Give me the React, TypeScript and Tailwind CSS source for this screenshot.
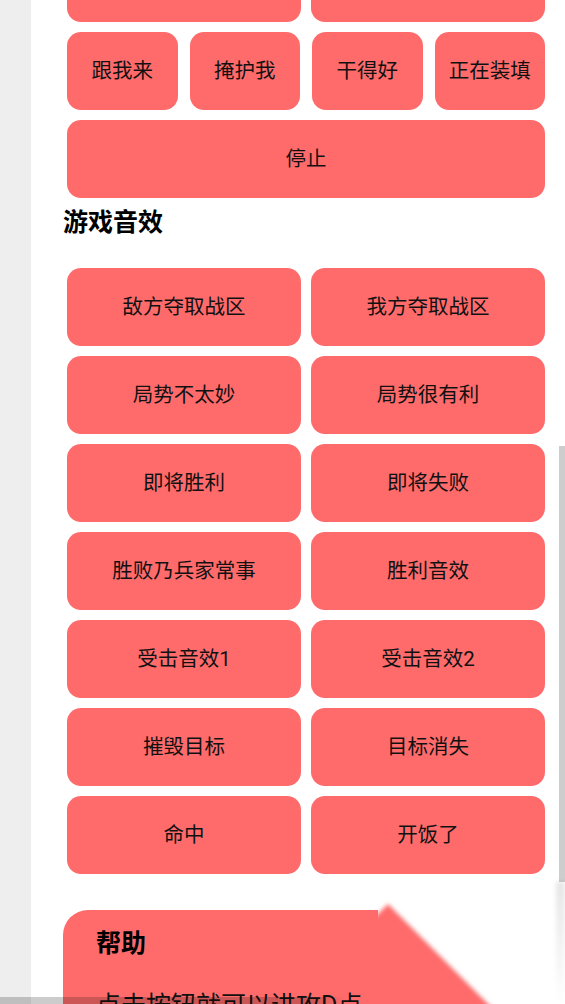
import React from "react";

const gameSounds = [
  "敌方夺取战区",
  "我方夺取战区",
  "局势不太妙",
  "局势很有利",
  "即将胜利",
  "即将失败",
  "胜败乃兵家常事",
  "胜利音效",
  "受击音效1",
  "受击音效2",
  "摧毁目标",
  "目标消失",
  "命中",
  "开饭了",
];

const quick = ["跟我来", "掩护我", "干得好", "正在装填"];

function Btn({ label }: { label: string }) {
  return (
    <button className="h-[78px] rounded-[14px] bg-[#ff6b6b] text-[20.5px] leading-none text-[#111] flex items-center justify-center whitespace-nowrap">
      {label}
    </button>
  );
}

export default function App() {
  return (
    <div className="relative flex h-[1004px] w-[565px] overflow-hidden font-[Roboto,'Noto_Sans_CJK_SC',sans-serif] text-[#111]">
      <div className="w-[31px] shrink-0 bg-[#eeeeee]" />
      <div className="flex-1 bg-white pl-[36px] pr-[20px]">
        <div className="-mt-[56px] flex flex-col">
          <div className="grid grid-cols-2 gap-[10px]">
            <Btn label="" />
            <Btn label="" />
          </div>
          <div className="mt-[10px] grid grid-cols-4 gap-[12px]">
            {quick.map((q) => (
              <Btn key={q} label={q} />
            ))}
          </div>
          <div className="mt-[10px] flex flex-col">
            <Btn label="停止" />
          </div>
          <h2 className="-ml-[4px] mt-[7px] text-[25px] font-bold leading-[36px] text-black">游戏音效</h2>
          <div className="mt-[27px] grid grid-cols-2 gap-[10px]">
            {gameSounds.map((s) => (
              <Btn key={s} label={s} />
            ))}
          </div>
          <div className="relative -ml-[4px] mt-[36px] w-[315px]">
            <svg
              className="absolute left-[250px] top-[-30px] overflow-visible"
              width="300"
              height="150"
              viewBox="0 0 300 150"
            >
              <defs>
                <filter id="soft" x="-50%" y="-50%" width="200%" height="200%">
                  <feGaussianBlur stdDeviation="2.2" />
                </filter>
              </defs>
              <polygon points="75,24 228,177 -78,177" fill="#ff6b6b" filter="url(#soft)" />
            </svg>
            <div className="relative rounded-tl-[25px] bg-[#ff6b6b] px-[33px] pb-[40px] pt-[16px]">
              <div className="text-[25px] font-bold leading-[36px] text-black">帮助</div>
              <p className="mt-[26px] whitespace-nowrap text-[25px] leading-[36px]">点击按钮就可以进攻D点</p>
            </div>
          </div>
        </div>
      </div>
      {/* vertical scrollbar */}
      <div className="absolute right-0 top-[446px] h-[436px] w-[6px] bg-[#cdcdcd]" />
      <div className="absolute right-0 top-[882px] h-[122px] w-[9px] bg-gradient-to-b from-black/10 to-transparent blur-[2px]" />
      {/* horizontal scrollbar */}
      <div className="absolute bottom-0 left-0 h-[7px] w-[345px] bg-[linear-gradient(to_right,rgba(0,0,0,0.2)_90%,rgba(0,0,0,0))]" />
    </div>
  );
}
